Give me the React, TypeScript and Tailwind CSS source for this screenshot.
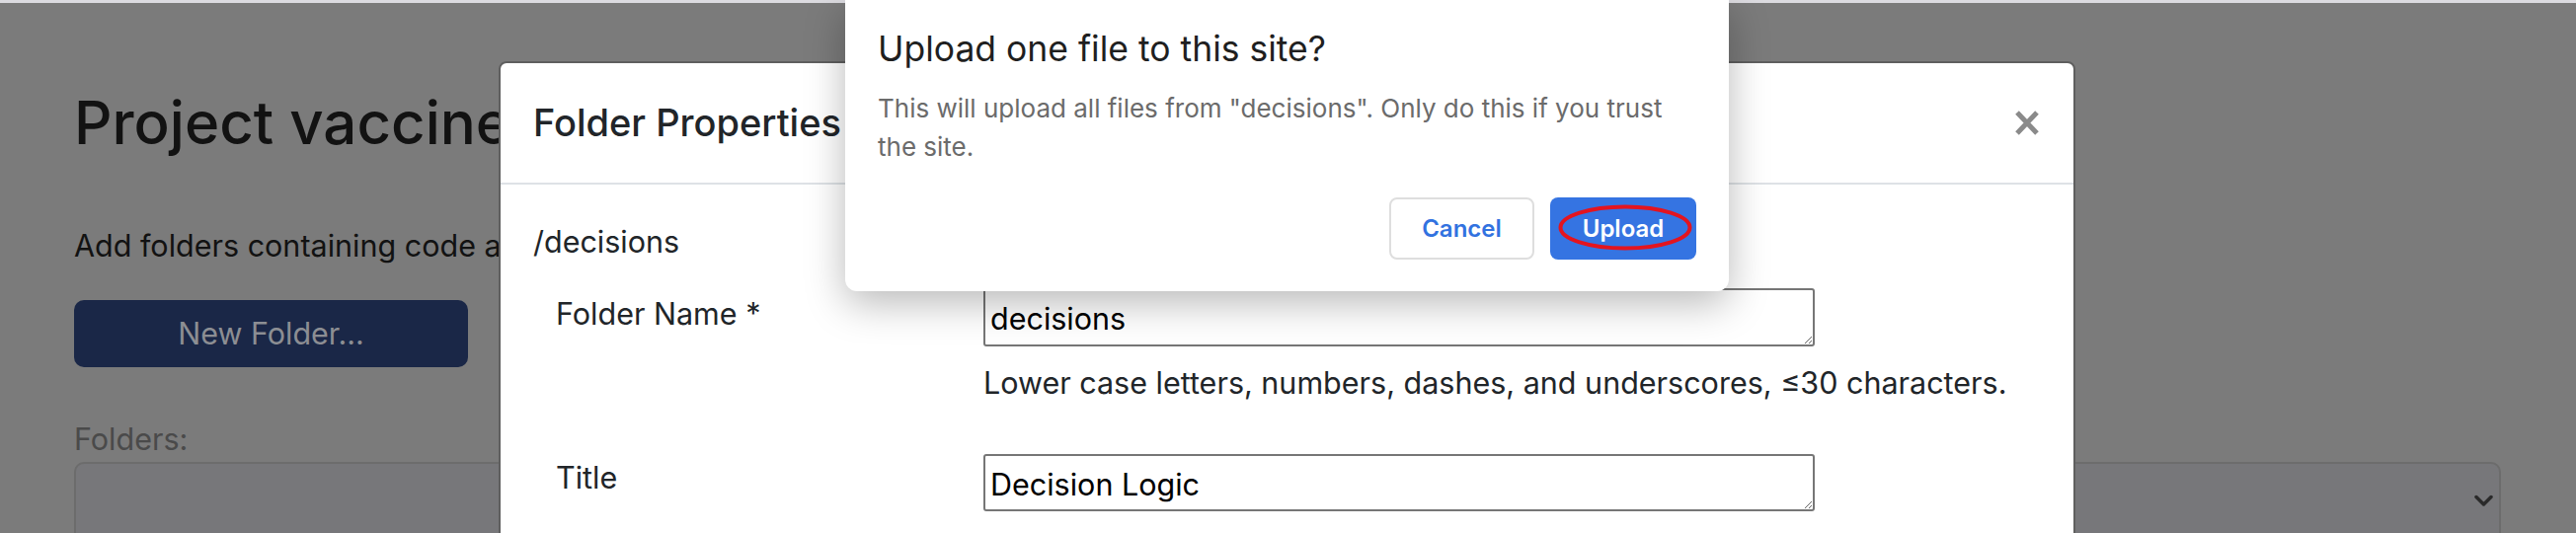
export default function App() {
  return (
    <div className="relative h-[540px] w-[2609px] overflow-hidden bg-[#7b7b7b] font-['Inter','Liberation_Sans',Arial,sans-serif]">
      <div className="h-[3px] bg-[#dcdbe0]" />

      {/* page under the backdrop */}
      <div className="flex flex-col pl-[75px] pr-[76px]">
        <h1 className="mt-[85px] text-[60px] leading-[72px] font-medium text-[#121212]">Project vaccine</h1>
        <p className="mt-[67px] w-[430px] overflow-hidden whitespace-nowrap text-[30.5px] leading-[43.5px] text-[#121212]">
          Add folders containing code and data files to the project.
        </p>
        <button className="mt-[33px] h-[68px] w-[399px] rounded-[10px] bg-[#1a2747] text-[30.5px] text-[#8c8e93]">
          New Folder...
        </button>
        <div className="mt-[51px] text-[30.5px] leading-[43.5px] text-[#4a4a4a]">Folders:</div>
        <div className="mt-[2px] flex h-[100px] items-start justify-end rounded-[10px] border-2 border-[#6c6c6c] bg-[#77777a] pt-[31px] pr-[6px]">
          <svg width="19" height="13" viewBox="0 0 19 13" fill="none">
            <path d="M2 2.5 L9.5 10 L17 2.5" stroke="#2a2a2a" strokeWidth="3.5" strokeLinecap="round" strokeLinejoin="round" />
          </svg>
        </div>
      </div>

      {/* Folder Properties modal */}
      <div className="absolute left-[505px] top-[62px] h-[520px] w-[1597px] rounded-[8px] border-2 border-[#5f5f5f] bg-white">
        <div className="flex h-[123px] items-center justify-between border-b-2 border-[#dee2e6] pl-[33px] pr-[34px]">
          <h2 className="text-[38px] leading-[43px] font-medium text-[#212529]">Folder Properties</h2>
          <svg width="26" height="27" viewBox="0 0 26 27">
            <path d="M3 3 L23 24 M23 3 L3 24" stroke="#8a8a8a" strokeWidth="5" strokeLinecap="butt" />
          </svg>
        </div>
        <div className="flex flex-col pl-[33px] text-[30.5px] leading-[43.5px] text-[#212529]">
          <div className="mt-[36px]">/decisions</div>
          <div className="mt-[25px] flex">
            <div className="mt-[4px] w-[456px] shrink-0 pl-[23px]">Folder Name *</div>
            <div className="flex flex-col">
              <textarea
                readOnly
                defaultValue="decisions"
                className="h-[59px] w-[842px] resize-y overflow-hidden rounded-[3px] border-2 border-[#767676] px-[5px] pt-[7px] text-[30.5px] leading-[43.5px] text-black outline-none"
              />
              <div className="mt-[15px] whitespace-nowrap">
                Lower case letters, numbers, dashes, and underscores, ≤30 characters.
              </div>
            </div>
          </div>
          <div className="mt-[51px] flex">
            <div className="mt-[2px] w-[456px] shrink-0 pl-[23px]">Title</div>
            <textarea
              readOnly
              defaultValue="Decision Logic"
              className="h-[58px] w-[842px] resize-y overflow-hidden rounded-[3px] border-2 border-[#767676] px-[5px] pt-[7px] text-[30.5px] leading-[43.5px] text-black outline-none"
            />
          </div>
        </div>
      </div>

      {/* browser upload prompt */}
      <div className="absolute left-[856px] top-0 flex w-[895px] flex-col rounded-b-[12px] bg-white px-[33px] pt-[32px] pb-[32px] shadow-[0_12px_40px_rgba(0,0,0,0.28)]">
        <div className="text-[35.5px] leading-[36px] font-normal text-[#1f1f1f]">Upload one file to this site?</div>
        <div className="mt-[22px] text-[26px] leading-[39px] text-[#6b6b6b]">
          This will upload all files from "decisions". Only do this if you trust
          <br />
          the site.
        </div>
        <div className="mt-[32px] flex justify-end gap-[16px]">
          <button className="h-[63px] w-[147px] rounded-[8px] border-2 border-[#dedede] bg-white text-[24px] font-semibold text-[#3272e0]">
            Cancel
          </button>
          <button className="relative h-[63px] w-[148px] rounded-[8px] bg-[#3574e2] text-[24px] font-semibold text-white">
            Upload
            <svg className="absolute left-[8px] top-[7px]" width="136" height="47" viewBox="0 0 136 47" fill="none">
              <ellipse cx="68" cy="23.5" rx="65.5" ry="21" stroke="#e3141f" strokeWidth="4" />
            </svg>
          </button>
        </div>
      </div>
    </div>
  );
}
